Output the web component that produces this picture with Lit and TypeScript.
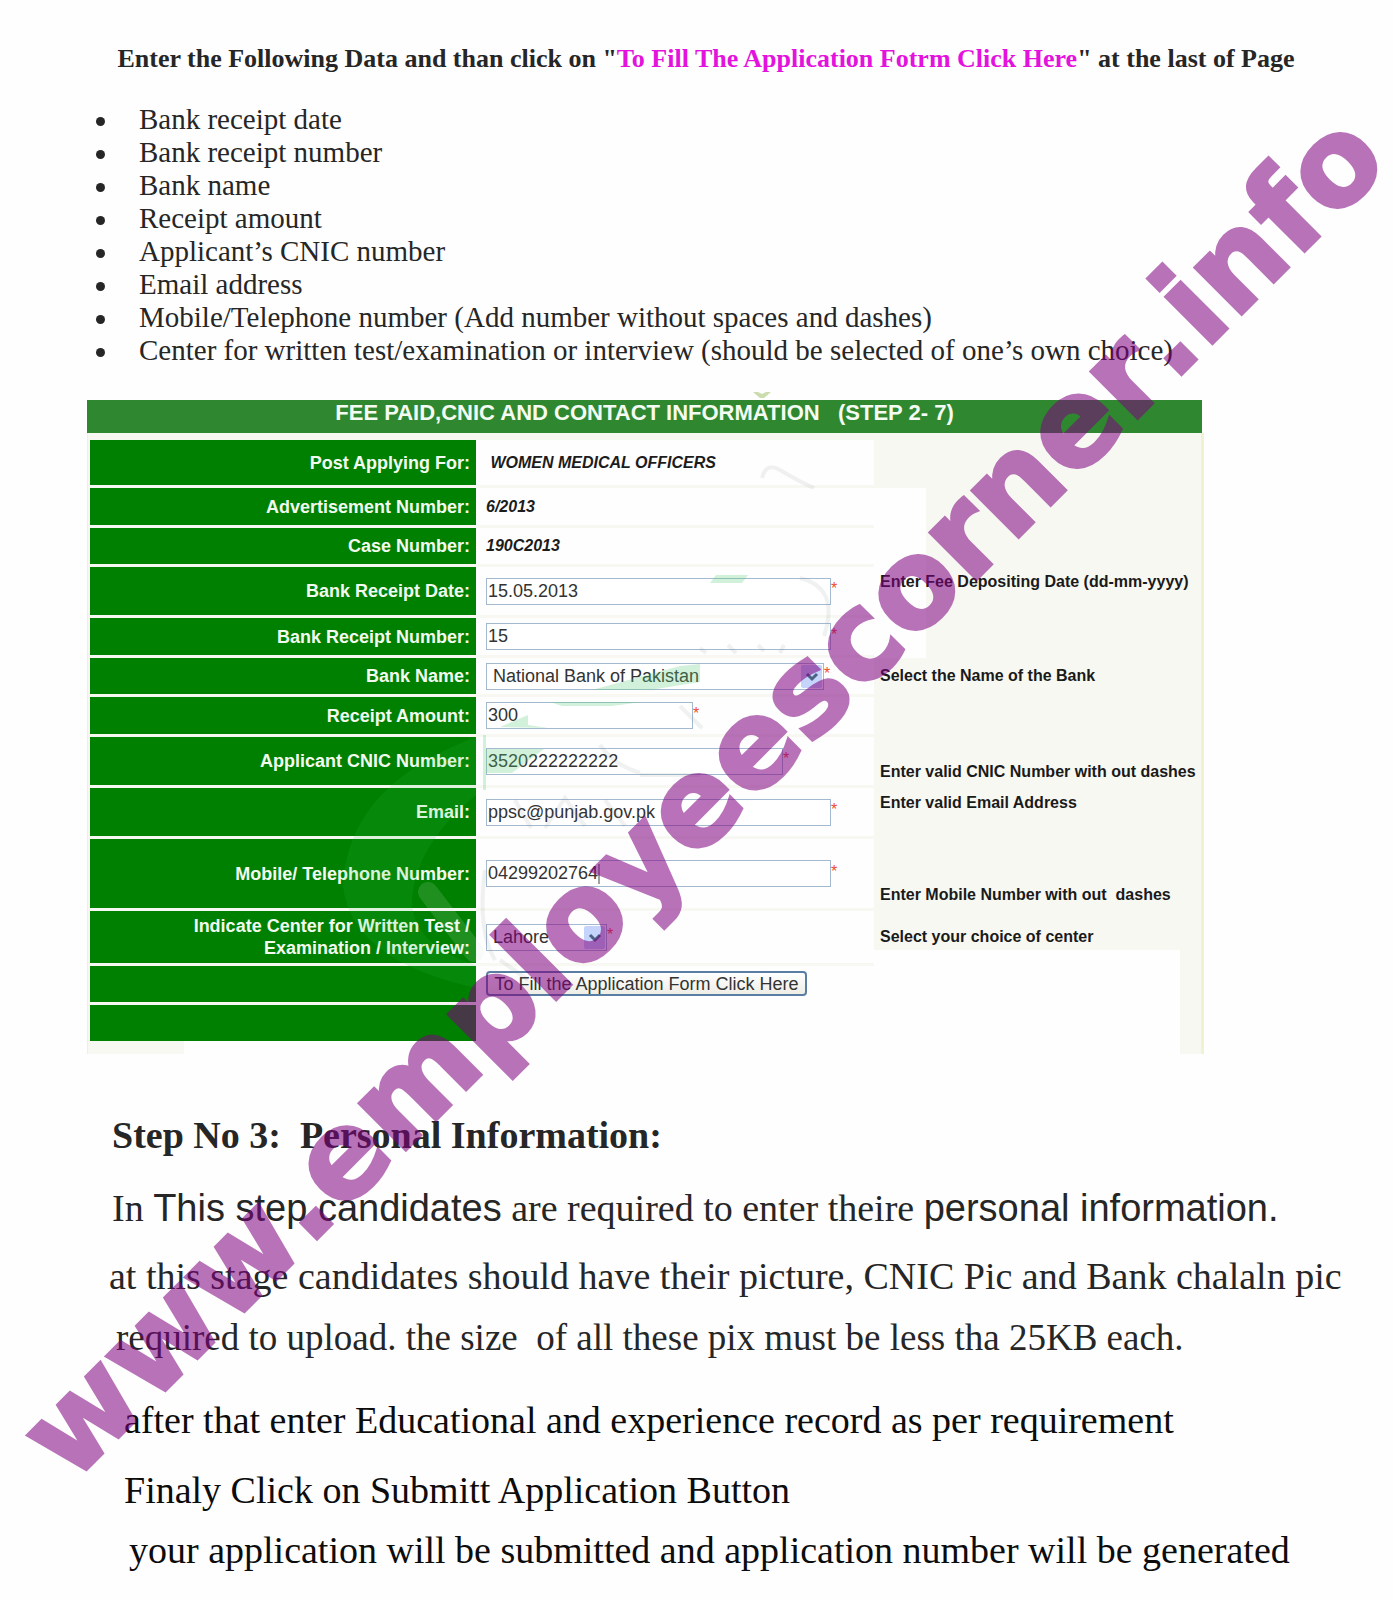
import { LitElement, html, css, svg, nothing } from "lit";
import type { TemplateResult } from "lit";
import { customElement } from "lit/decorators.js";

interface Row {
  id: string;
  label: string;
  size: string;
  kind: "fact" | "text" | "select";
  value: string;
  width?: string;
  hint?: string;
  hintPlace?: string;
}

const NEEDED = [
  "Bank receipt date",
  "Bank receipt number",
  "Bank name",
  "Receipt amount",
  "Applicant’s CNIC number",
  "Email address",
  "Mobile/Telephone number (Add number without spaces and dashes)",
  "Center for written test/examination or interview (should be selected of one’s own choice)",
];

const ROWS: Row[] = [
  { id: "post", label: "Post Applying For:", size: "h45", kind: "fact", value: "\u00a0WOMEN MEDICAL OFFICERS" },
  { id: "advert", label: "Advertisement Number:", size: "h37", kind: "fact", value: "6/2013", hintPlace: "faded" },
  { id: "case", label: "Case Number:", size: "h36", kind: "fact", value: "190C2013", hintPlace: "faded" },
  { id: "date", label: "Bank Receipt Date:", size: "h48", kind: "text", value: "15.05.2013", width: "w-full", hint: "Enter Fee Depositing Date (dd-mm-yyyy)", hintPlace: "high faded" },
  { id: "receipt", label: "Bank Receipt Number:", size: "h37", kind: "text", value: "15", width: "w-full", hintPlace: "faded" },
  { id: "bank", label: "Bank Name:", size: "h36", kind: "select", value: "National Bank of Pakistan", width: "w-bank", hint: "Select the Name of the Bank" },
  { id: "amount", label: "Receipt Amount:", size: "h37", kind: "text", value: "300", width: "w-amount" },
  { id: "cnic", label: "Applicant CNIC Number:", size: "h48", kind: "text", value: "3520222222222", width: "w-cnic", hint: "Enter valid CNIC Number with out dashes", hintPlace: "low" },
  { id: "email", label: "Email:", size: "h48", kind: "text", value: "ppsc@punjab.gov.pk", width: "w-full", hint: "Enter valid Email Address", hintPlace: "high" },
  { id: "mobile", label: "Mobile/ Telephone Number:", size: "h69", kind: "text", value: "04299202764", width: "w-full", hint: "Enter Mobile Number with out \u00a0dashes", hintPlace: "low" },
  { id: "center", label: "Indicate Center for Written Test / Examination / Interview:", size: "h52", kind: "select", value: "Lahore", width: "w-center", hint: "Select your choice of center", hintPlace: "ending" },
];

@customElement("fee-form")
export class FeeForm extends LitElement {
  static styles = css`
    :host { display: block; font-family: "Liberation Sans", Arial, sans-serif; }
    .title {
      margin: 0 2px 0 0; padding: 0 0 8px; background: #2f8830; color: #f4fbf2;
      font-size: 22px; line-height: 25px; font-weight: bold; text-align: center; white-space: pre-wrap;
    }
    form {
      display: flex; flex-direction: column; gap: 3px; padding: 7px 0 0 2px;
      background: #f7f8f2; border-left: 1px solid #eef3d2; border-right: 3px solid #f0f2d2;
    }
    .row { display: grid; grid-template-columns: 386fr 398fr 327fr; }
    .h36 { min-height: 36px; }
    .h37 { min-height: 37px; }
    .h45 { min-height: 45px; }
    .h48 { min-height: 48px; }
    .h52 { min-height: 52px; }
    .h69 { min-height: 69px; }
    .label {
      display: flex; align-items: center; justify-content: flex-end; padding: 0 6px 0 80px;
      background: #008000; color: #f2fbef; font-size: 18px; line-height: 22px; font-weight: bold; text-align: right;
    }
    .field {
      display: flex; align-items: center; padding-left: 10px; background: #fefefe;
      color: #333; font-size: 18px;
    }
    .fact { color: #1c1c1c; font-size: 16px; font-weight: bold; font-style: italic; }
    .control {
      box-sizing: border-box; height: 27px; min-width: 0; padding: 0 1px; margin: 0;
      border: 1px solid #a3b9cf; border-radius: 0; background: #fff; color: #333;
      font: inherit; appearance: none; outline: none;
    }
    .w-full { width: 345px; }
    .w-bank { width: 338px; }
    .w-amount { width: 207px; }
    .w-cnic { width: 297px; }
    .w-center { width: 121px; }
    .pick { display: grid; align-items: center; }
    .pick > * { grid-area: 1 / 1; }
    .pick .control { width: 100%; padding: 0 24px 0 6px; }
    .arrow { justify-self: end; margin-right: 2px; pointer-events: none; }
    .star { align-self: center; padding-bottom: 4px; color: #ee4f2b; font-size: 16px; line-height: 18px; }
    .hint {
      padding: 0 0 0 6px; display: flex; align-items: center; color: #1a1a1a;
      font-size: 16px; line-height: 20px; font-weight: bold; white-space: nowrap;
    }
    .high { align-items: flex-start; padding-top: 5px; }
    .low { align-items: flex-end; padding-bottom: 3px; }
    .faded { background: linear-gradient(#fefefe, #fefefe) 0 0 / 52px 100% no-repeat; margin-bottom: -3px; }
    .ending { background: linear-gradient(#fefefe, #fefefe) 0 39px / calc(100% - 21px) 100% no-repeat; margin-bottom: -3px; padding-bottom: 3px; }
    .wide { grid-column: 2 / 4; margin-right: 21px; margin-bottom: -3px; padding-bottom: 4px; }
    .submit {
      height: 25px; width: 321px; padding: 0; border: 2px solid #5a7ea3; border-radius: 4px;
      background: linear-gradient(#fff, #eeede6); color: #333; font: inherit; line-height: 20px; white-space: nowrap;
    }
    .foot { height: 10px; margin: -3px 21px 0 94px; padding-top: 3px; background: #fefefe; }
  `;

  private control(r: Row): TemplateResult {
    if (r.kind === "fact") return html`<output class="fact" id=${r.id}>${r.value}</output>`;
    const star = html`<span class="star">*</span>`;
    if (r.kind === "text")
      return html`<input class="control ${r.width}" id=${r.id} type="text" .value=${r.value} />${star}`;
    return html`<span class="pick ${r.width}">
        <select class="control" id=${r.id}><option>${r.value}</option></select>
        <svg class="arrow" width="21" height="23" viewBox="0 0 21 23" aria-hidden="true">
          <rect width="21" height="23" rx="2" fill="#c4d4fb"></rect>
          <path d="M6 9l5 5 5-5" fill="none" stroke="#4d6185" stroke-width="3"></path>
        </svg></span>${star}`;
  }

  render() {
    return html`
      <h2 class="title">FEE PAID,CNIC AND CONTACT INFORMATION   (STEP 2- 7)</h2>
      <form @submit=${(e: Event) => e.preventDefault()}>
        ${ROWS.map(
          (r) => html`<div class="row ${r.size}">
            <label class="label" for=${r.id}>${r.label}</label>
            <div class="field">${this.control(r)}</div>
            <div class="hint ${r.hintPlace ?? ""}">${r.hint ?? nothing}</div>
          </div>`
        )}
        <div class="row h36">
          <div class="label"></div>
          <div class="field wide"><button class="submit" type="submit">To Fill the Application Form Click Here</button></div>
        </div>
        <div class="row h36">
          <div class="label"></div>
          <div class="field wide"></div>
        </div>
        <div class="foot"></div>
      </form>
    `;
  }
}

const crest = svg`
  <path d="M753 392h5l4 2 4-2h5l-7 6h-4z" fill="#cbdcae"></path>
  <path d="M476 737Q348 785 343 885Q350 960 476 988V965Q412 945 412 900Q415 845 476 795Z" fill="#2fc050" opacity="0.13"></path>
  <path d="M428 892L474 952" stroke="#d8f0d8" stroke-width="20" stroke-linecap="round" opacity="0.14"></path>
  <g fill="#5fd07c" opacity="0.28">
    <path d="M716 575h32l-6 8h-32z"></path>
    <path d="M592 690L680 666L700 664V682L650 690z"></path>
    <path d="M550 702h92l-30 4h-50z"></path>
    <path d="M500 727l28-12v10l20 3z"></path>
    <path d="M483 735h3v55h-3z"></path>
    <path d="M486 749h58l-32 24h-26z"></path>
  </g>
  <g fill="none" stroke="#8a8f94" opacity="0.12" stroke-width="4">
    <path d="M762 478q4-16 18-8q20 12 34 18"></path>
    <path d="M700 648l6 5M728 645l8 8M758 645l6 6M784 645l-4 8"></path>
    <path d="M800 578q40 10 24 58"></path>
    <path d="M680 706l22 22M600 745q14 20 40 28M640 775h60"></path>
    <path d="M515 800l16 28M545 828l20-30l20 28M605 800l20 26"></path>
    <path d="M485 870q-8 60 10 90M500 960l28 20"></path>
  </g>
  <path d="M599 864v20" stroke="#444" stroke-width="1"></path>
`;

@customElement("app-root")
export class AppRoot extends LitElement {
  static styles = css`
    :host {
      display: block; position: relative; overflow: hidden; background: #fefefe; color: #262626;
      font-family: "Liberation Serif", "Times New Roman", serif;
    }
    .page { padding: 42px 20px 23px 87px; }
    .lead { margin: 0 0 28px; padding-right: 48px; font-size: 26px; line-height: 33px; text-align: center; }
    .call { color: #e312dc; text-decoration: none; }
    .needed { margin: 0 0 33px; padding: 0 0 0 52px; font-size: 29px; line-height: 33px; list-style: none; }
    .item { display: flex; align-items: center; margin-left: -43px; gap: 34px; }
    .item::before { content: ""; flex: none; width: 9px; height: 9px; margin-top: 4px; border-radius: 50%; background: #262626; }
    .form { margin: 0 169px 51px 0; }
    .step { margin: 0 0 13px; padding-left: 25px; font-size: 38px; line-height: 60px; white-space: pre-wrap; }
    .line { margin: 0; padding-left: 25px; font-size: 38px; line-height: 60px; white-space: pre-wrap; }
    .sans { font-family: "Liberation Sans", Arial, sans-serif; line-height: 1; }
    .first { margin-bottom: 8px; }
    .second { margin-bottom: 2px; padding-left: 22px; }
    .third { margin-bottom: 22px; padding-left: 29px; font-size: 37px; }
    .black { color: #0c0c0c; padding-left: 37px; }
    .fourth { margin-bottom: 10px; }
    .last { padding-left: 42px; }
    .over { position: absolute; top: 0; left: 0; width: 100%; height: auto; pointer-events: none; }
    .mark {
      font: bold 121px "DejaVu Sans", Verdana, sans-serif; font-kerning: none;
      fill: #800080; stroke: #800080; stroke-width: 3px; opacity: 0.55;
    }
  `;

  render() {
    return html`
      <main class="page">
        <h1 class="lead">Enter the Following Data and than click on "<a class="call" href="#apply">To Fill The Application Fotrm Click Here</a>" at the last of Page</h1>
        <ul class="needed">${NEEDED.map((t) => html`<li class="item">${t}</li>`)}</ul>
        <fee-form class="form" id="apply"></fee-form>
        <h2 class="step">Step No 3:  Personal Information:</h2>
        <p class="line first">In <span class="sans">This step candidates</span> are required to enter theire <span class="sans">personal information.</span></p>
        <p class="line second">at this stage candidates should have their picture, CNIC Pic and Bank chalaln pic</p>
        <p class="line third">required to upload. the size  of all these pix must be less tha 25KB each.</p>
        <p class="line black fourth">after that enter Educational and experience record as per requirement</p>
        <p class="line black">Finaly Click on Submitt Application Button</p>
        <p class="line black last">your application will be submitted and application number will be generated</p>
      </main>
      <svg class="over" viewBox="0 0 1393 1600">
        ${crest}
        <text class="mark" transform="translate(71 1485) rotate(-45)">www.employeescorner.info</text>
      </svg>
    `;
  }
}
